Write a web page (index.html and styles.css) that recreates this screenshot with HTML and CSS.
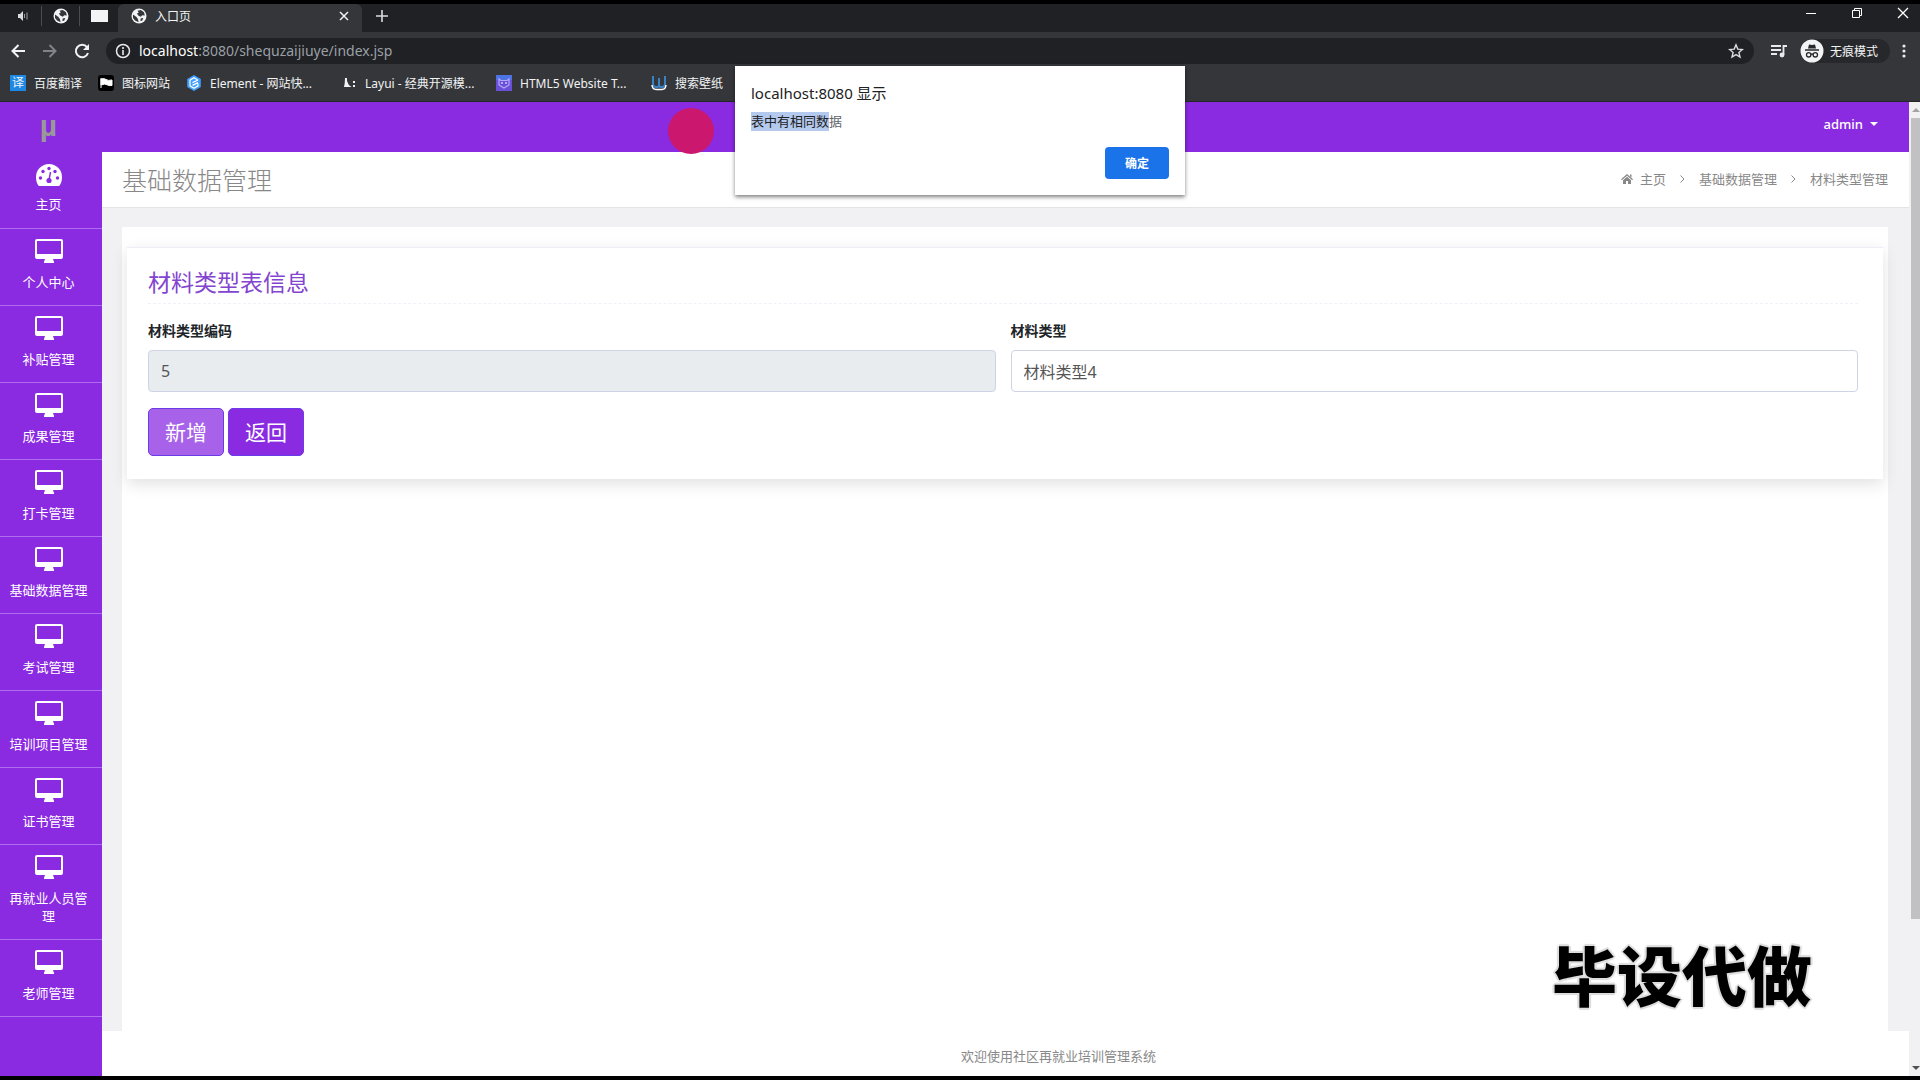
FILE: index.html
```html
<!DOCTYPE html>
<html lang="zh-CN">
<head>
<meta charset="UTF-8" />
<title>入口页</title>
<link rel="stylesheet" href="styles.css">
</head>
<body>
  <svg class="defs" aria-hidden="true">
    <symbol id="globe" viewBox="0 0 16 16">
      <circle cx="8" cy="8" r="7.5" fill="#f1f3f4"/>
      <path d="M2 6.5 5.5 9l1.5 2.2.6 3L4 12.5 2 10zM6.5 2.8 9.8 2l3.2 2.3.8 3.2-2.5-.3-1.5 1.6L7.2 7.4 6 5.6l1.8-1.2zM9.6 10.4l2.7-.4-1 2.4-1.8.9z" fill="#35363a"/>
    </symbol>
    <symbol id="desktop" viewBox="0 0 28 24">
      <path fill-rule="evenodd" d="M2 0h24a2 2 0 0 1 2 2v16a2 2 0 0 1-2 2h-8l1 3v1H9v-1l1-3H2a2 2 0 0 1-2-2V2a2 2 0 0 1 2-2zm0 2v13h24V2z" fill="#fff"/>
    </symbol>
  </svg>

  <header class="browser">
    <div class="tab-strip">
      <div class="pinned">
        <svg width="12" height="12" viewBox="0 0 12 12"><path d="M1 4h2l3-3v10L3 8H1z" fill="#dadce0"/><path d="M7.5 4v4M10 2.5v7" stroke="#9aa0a6" stroke-width="1"/></svg>
      </div>
      <div class="pinned"><svg width="16" height="16"><use href="#globe"/></svg></div>
      <div class="pinned"><span class="blank-icon"></span></div>
      <div class="tab">
        <svg width="16" height="16"><use href="#globe"/></svg>
        <span class="tab-title">入口页</span>
        <button class="icon-btn" aria-label="关闭标签页"><svg width="10" height="10" viewBox="0 0 10 10"><path d="M1 1l8 8M9 1L1 9" stroke="#f1f3f4" stroke-width="1.5"/></svg></button>
      </div>
      <button class="icon-btn new-tab" aria-label="新标签页"><svg width="12" height="12" viewBox="0 0 12 12"><path d="M6 0v12M0 6h12" stroke="#dadce0" stroke-width="1.6"/></svg></button>
      <div class="window-btns">
        <button class="icon-btn" aria-label="最小化"><svg width="12" height="12" viewBox="0 0 12 12"><path d="M1 6.5h10" stroke="#fff"/></svg></button>
        <button class="icon-btn" aria-label="还原"><svg width="12" height="12" viewBox="0 0 12 12"><path d="M1.5 3.5h7v7h-7zM3.5 3V1.5h7v7H9" fill="none" stroke="#fff"/></svg></button>
        <button class="icon-btn" aria-label="关闭"><svg width="12" height="12" viewBox="0 0 12 12"><path d="M1 1l10 10M11 1L1 11" stroke="#fff" stroke-width="1.3"/></svg></button>
      </div>
    </div>

    <div class="toolbar">
      <button class="icon-btn" aria-label="后退"><svg width="16" height="16" viewBox="0 0 16 16"><path d="M8.5 2 2.5 8l6 6M2.5 8H15" fill="none" stroke="#f1f3f4" stroke-width="2"/></svg></button>
      <button class="icon-btn" aria-label="前进"><svg width="16" height="16" viewBox="0 0 16 16"><path d="M7.5 2l6 6-6 6M13.5 8H1" fill="none" stroke="#808387" stroke-width="2"/></svg></button>
      <button class="icon-btn" aria-label="刷新"><svg width="16" height="16" viewBox="0 0 16 16"><path d="M13 4.2A6.2 6.2 0 1 0 14 10" fill="none" stroke="#f1f3f4" stroke-width="2"/><path d="M15 1v6H9z" fill="#f1f3f4"/></svg></button>
      <div class="address">
        <svg width="16" height="16" viewBox="0 0 16 16"><circle cx="8" cy="8" r="6.5" fill="none" stroke="#e8eaed" stroke-width="1.5"/><path d="M8 7v5M8 4v2" stroke="#e8eaed" stroke-width="1.6"/></svg>
        <span class="url"><b>localhost</b>:8080/shequzaijiuye/index.jsp</span>
        <button class="icon-btn" aria-label="收藏"><svg width="16" height="16" viewBox="0 0 16 16"><path d="M8 1.8l1.8 4.3 4.6.4-3.5 3 1.1 4.5L8 11.6 4 14l1.1-4.5-3.5-3 4.6-.4z" fill="none" stroke="#dadce0" stroke-width="1.4"/></svg></button>
      </div>
      <button class="icon-btn" aria-label="媒体控制"><svg width="18" height="16" viewBox="0 0 18 16"><path d="M1 3h10M1 7h10M1 11h6" stroke="#e8eaed" stroke-width="1.8"/><path d="M13.5 12V3H17" fill="none" stroke="#e8eaed" stroke-width="1.8"/><circle cx="12" cy="12" r="2.4" fill="#e8eaed"/></svg></button>
      <div class="incognito">
        <svg width="24" height="24" viewBox="0 0 24 24"><circle cx="12" cy="12" r="11.5" fill="#f1f3f4"/><path d="M8 9.5 9 5.500l3 .5 3-.5 1 4z" fill="#27282b"/><path d="M5 11h14M11 15.500q1-1 2 0" fill="none" stroke="#27282b" stroke-width="1.300"/><circle cx="8.700" cy="15.800" r="2.200" fill="none" stroke="#27282b" stroke-width="1.300"/><circle cx="15.300" cy="15.800" r="2.200" fill="none" stroke="#27282b" stroke-width="1.300"/></svg>
        <span>无痕模式</span>
      </div>
      <button class="icon-btn" aria-label="菜单"><svg width="4" height="14" viewBox="0 0 4 14"><circle cx="2" cy="2" r="1.6" fill="#e8eaed"/><circle cx="2" cy="7" r="1.6" fill="#e8eaed"/><circle cx="2" cy="12" r="1.6" fill="#e8eaed"/></svg></button>
    </div>

    <nav class="bookmarks">
      <a href="#"><span class="fanyi-icon">译</span>百度翻译</a>
      <a href="#"><svg width="16" height="16" viewBox="0 0 16 16"><rect width="16" height="16" rx="3" fill="#000"/><path d="M3 3v10M3 4q3-1 5 .5T14 5v5.5q-3 .5-5-.8T3 10z" fill="#fff" stroke="#fff"/></svg>图标网站</a>
      <a href="#" class="long"><svg width="16" height="16" viewBox="0 0 16 16"><path d="M8 0l6.800 4v8L8 16l-6.800-4V4z" fill="#409eff"/><path d="M11.500 4.800 8 2.800 4 5.200v5.600L8 13.200l4-2.400V8.600M6.500 7.600l5.500-2.600M6.500 10.400l5.500-2.800" fill="none" stroke="#fff" stroke-width="1.200"/></svg>Element - 网站快...</a>
      <a href="#" class="long"><svg width="16" height="16" viewBox="0 0 16 16"><path d="M4 3h2v9H3q1-4 1-9zM6 6q1 4 4.500 6H6zM12 6h2v2h-2zM12 10h2v2h-2z" fill="#f1f3f4"/></svg>Layui - 经典开源模...</a>
      <a href="#" class="long"><svg width="16" height="16" viewBox="0 0 16 16"><rect width="16" height="16" fill="#6a4fd8"/><path d="M0 0h16v5H0z" fill="#4d72e3"/><path d="M3 4l2 1.500h6L13 4v6l-5 3-5-3z" fill="none" stroke="#b7a8ff" stroke-width="1.200"/><circle cx="6" cy="8" r="1" fill="#cfc6ff"/><circle cx="10" cy="8" r="1" fill="#cfc6ff"/></svg>HTML5 Website T...</a>
      <a href="#"><svg width="16" height="16" viewBox="0 0 16 16"><path d="M2 1v8q0 3 3 3h1q2 0 2-2V3M8 10q0 2 2 2h1q3 0 3-3V1" fill="none" stroke="#3b82c4" stroke-width="2"/><path d="M1 10q.5 4.500 4 4.500h6q3.500 0 4-4.500" fill="none" stroke="#fff" stroke-width="1.500"/></svg>搜索壁纸</a>
    </nav>
  </header>

  <div class="viewport">
    <aside class="sidebar">
      <a href="#" class="logo">µ</a>
      <a href="#" class="menu-item home">
        <svg width="26" height="22" viewBox="0 0 26 22"><path d="M13 0a13 13 0 0 1 13 13c0 3-.7 6-2 8q-.5 1-1.500 1h-19Q2.500 22 2 21c-1.300-2-2-5-2-8A13 13 0 0 1 13 0z" fill="#fff"/><g fill="#8a2be2"><circle cx="4.500" cy="14" r="1.700"/><circle cx="7" cy="7.500" r="1.700"/><circle cx="13" cy="4.500" r="1.700"/><circle cx="19" cy="7.500" r="1.700"/><circle cx="21.500" cy="14" r="1.700"/><circle cx="13" cy="16.500" r="2.600"/></g><path d="M13 16l1.500-8" stroke="#8a2be2" stroke-width="1.400"/></svg>
        <span>主页</span>
      </a>
      <a href="#" class="menu-item"><svg width="28" height="24"><use href="#desktop"/></svg><span>个人中心</span></a>
      <a href="#" class="menu-item"><svg width="28" height="24"><use href="#desktop"/></svg><span>补贴管理</span></a>
      <a href="#" class="menu-item"><svg width="28" height="24"><use href="#desktop"/></svg><span>成果管理</span></a>
      <a href="#" class="menu-item"><svg width="28" height="24"><use href="#desktop"/></svg><span>打卡管理</span></a>
      <a href="#" class="menu-item"><svg width="28" height="24"><use href="#desktop"/></svg><span>基础数据管理</span></a>
      <a href="#" class="menu-item"><svg width="28" height="24"><use href="#desktop"/></svg><span>考试管理</span></a>
      <a href="#" class="menu-item"><svg width="28" height="24"><use href="#desktop"/></svg><span>培训项目管理</span></a>
      <a href="#" class="menu-item"><svg width="28" height="24"><use href="#desktop"/></svg><span>证书管理</span></a>
      <a href="#" class="menu-item"><svg width="28" height="24"><use href="#desktop"/></svg><span>再就业人员管理</span></a>
      <a href="#" class="menu-item"><svg width="28" height="24"><use href="#desktop"/></svg><span>老师管理</span></a>
    </aside>

    <div class="main">
      <div class="navbar">
        <button class="user">admin <span class="caret"></span></button>
      </div>
      <div class="title-bar">
        <h1>基础数据管理</h1>
        <nav class="breadcrumb">
          <a href="#"><svg width="12" height="12" viewBox="0 0 12 12"><path d="M6 1l6 5.300-.8.900L6 2.800.8 7.200 0 6.300zM9 1.500h1.500v3L9 3.200z" fill="#888"/><path d="M6 3.800l4 3.400V11H7V8H5v3H2V7.200z" fill="#888"/></svg>主页</a>
          <svg width="5" height="8" viewBox="0 0 5 8"><path d="M.5.5 4 4 .5 7.500" fill="none" stroke="#888"/></svg>
          <span>基础数据管理</span>
          <svg width="5" height="8" viewBox="0 0 5 8"><path d="M.5.5 4 4 .5 7.500" fill="none" stroke="#888"/></svg>
          <span>材料类型管理</span>
        </nav>
      </div>

      <div class="content">
        <div class="panel">
          <form class="card">
            <h2>材料类型表信息</h2>
            <div class="fields">
              <div class="field">
                <label for="typeCode">材料类型编码</label>
                <input type="text" id="typeCode" value="5" readonly />
              </div>
              <div class="field">
                <label for="typeName">材料类型</label>
                <input type="text" id="typeName" value="材料类型4" />
              </div>
            </div>
            <div class="actions">
              <button type="button" class="btn btn-add">新增</button>
              <button type="button" class="btn">返回</button>
            </div>
          </form>
        </div>
      </div>

      <footer class="footer">欢迎使用社区再就业培训管理系统</footer>
    </div>

    <div class="scrollbar">
      <span class="arrow up"></span>
      <div class="track"><div class="thumb"></div></div>
      <span class="arrow down"></span>
    </div>
  </div>

  <div class="pointer"></div>

  <div class="dialog" role="alertdialog" aria-labelledby="dialogTitle">
    <p class="dialog-title" id="dialogTitle">localhost:8080 显示</p>
    <p class="dialog-text"><mark>表中有相同数</mark>据</p>
    <button class="dialog-ok">确定</button>
  </div>

  <div class="watermark">毕设代做</div>
</body>
</html>
```

FILE: styles.css
```css
* {
  box-sizing: border-box;
}

body {
  margin: 0;
  height: 100vh;
  display: flex;
  flex-direction: column;
  border-top: 4px solid #000;
  border-bottom: 4px solid #000;
  overflow: hidden;
  position: relative;
  font-family: "Noto Sans", "Noto Sans CJK SC", sans-serif;
  font-size: 13px;
  color: #212529;
  background-color: #fff;
}

h1, h2, p {
  margin: 0;
}

a {
  color: inherit;
  text-decoration: none;
}

button, input {
  font-family: inherit;
}

svg {
  display: block;
  flex-shrink: 0;
}

.defs {
  position: absolute;
  width: 0;
  height: 0;
}

/* 浏览器 */
.browser {
  background-color: #35363a;
  color: #f1f3f4;
  font-size: 12px;
  border-bottom: 1px solid #242528;
}

.icon-btn {
  display: flex;
  padding: 0;
  border: none;
  background: none;
  cursor: pointer;
}

.tab-strip {
  display: flex;
  align-items: center;
  height: 28px;
  padding-left: 4px;
  background-color: #202124;
}

.pinned {
  display: flex;
  justify-content: center;
  align-items: center;
  width: 38px;
  height: 20px;
  margin-bottom: 4px;
  border-right: 1px solid #4a4c50;
}

.pinned:nth-child(3) {
  border-right: none;
}

.blank-icon {
  width: 17px;
  height: 12px;
  background-color: #f1f3f4;
}

.tab {
  display: flex;
  align-items: center;
  gap: 8px;
  width: 244px;
  height: 28px;
  padding: 0 13px 4px;
  background-color: #35363a;
  border-radius: 6px 6px 0 0;
}

.tab-title {
  flex: 1;
}

.new-tab {
  margin: 0 0 4px 14px;
}

.window-btns {
  display: flex;
  gap: 34px;
  margin-left: auto;
  padding: 0 11px 10px 0;
}

.toolbar {
  display: flex;
  align-items: center;
  gap: 16px;
  height: 37px;
  padding: 0 14px 0 10px;
}

.address {
  flex: 1;
  display: flex;
  align-items: center;
  gap: 8px;
  height: 26px;
  padding: 0 10px 0 9px;
  border-radius: 13px;
  background-color: #202124;
}

.url {
  flex: 1;
  font-size: 14px;
  color: #9aa0a6;
}

.url b {
  font-weight: normal;
  color: #fff;
}

.incognito {
  display: flex;
  align-items: center;
  gap: 6px;
  height: 24px;
  margin-left: -4px;
  padding-right: 12px;
  border-radius: 12px;
  background-color: #27282b;
}

.toolbar .incognito + .icon-btn {
  margin-left: -4px;
}

.bookmarks {
  display: flex;
  align-items: center;
  gap: 16px;
  height: 32px;
  padding: 0 10px 4px;
}

.bookmarks a {
  display: flex;
  align-items: center;
  gap: 8px;
  white-space: nowrap;
}

.bookmarks .long {
  width: 139px;
}

.fanyi-icon {
  width: 16px;
  height: 16px;
  line-height: 16px;
  text-align: center;
  background-color: #1e88e5;
}

/* 页面 */
.viewport {
  flex: 1;
  display: flex;
  min-height: 0;
}

.sidebar {
  width: 102px;
  flex-shrink: 0;
  background-color: #8a2be2;
  color: #fff;
}

.logo {
  display: block;
  height: 52px;
  padding-right: 5px;
  text-align: center;
  font-family: "Liberation Sans", sans-serif;
  font-size: 30px;
  line-height: 48px;
  font-weight: bold;
  color: #999;
}

.menu-item {
  display: flex;
  flex-direction: column;
  align-items: center;
  gap: 10px;
  padding: 10px 13px 14px 8px;
  border-bottom: 1px solid #b06cf0;
  line-height: 18px;
  text-align: center;
}

.menu-item.home {
  gap: 9px;
  padding-bottom: 15px;
}

.main {
  flex: 1;
  display: flex;
  flex-direction: column;
  min-width: 0;
}

.navbar {
  display: flex;
  justify-content: flex-end;
  align-items: center;
  height: 50px;
  padding: 0 31px 6px;
  background-color: #8a2be2;
}

.user {
  display: flex;
  align-items: center;
  gap: 7px;
  padding: 0;
  border: none;
  background: none;
  color: #fff;
  font-size: 13px;
  font-weight: 500;
}

.caret {
  border: 4px solid transparent;
  border-top-color: #fff;
  border-bottom: none;
}

.title-bar {
  display: flex;
  justify-content: space-between;
  align-items: center;
  height: 56px;
  padding: 0 21px 2px 20px;
  background-color: #fff;
  border-bottom: 1px solid #e4e4e4;
}

.title-bar h1 {
  font-family: "Noto Sans CJK SC Light", "Noto Sans CJK SC", sans-serif;
  font-size: 25px;
  font-weight: 300;
  line-height: 36px;
  color: #888;
}

.breadcrumb {
  display: flex;
  align-items: center;
  gap: 14px;
  color: #888;
}

.breadcrumb a {
  display: flex;
  align-items: center;
  gap: 7px;
}

.content {
  flex: 1;
  display: flex;
  padding: 19px 21px 0 20px;
  background-color: #f1f1f4;
}

.panel {
  flex: 1;
  padding: 20px 5px;
  background-color: #fff;
}

.card {
  padding: 16px 25px 23px 21px;
  border-top: 1px solid #eeeef6;
  background-color: #fff;
  box-shadow: 0 5px 15px rgba(0, 0, 0, 0.12);
}

.card h2 {
  padding-bottom: 3px;
  border-bottom: 1px dashed #f0f0f8;
  font-size: 23px;
  line-height: 36px;
  font-weight: normal;
  color: #8344cf;
}

.fields {
  display: grid;
  grid-template-columns: 1fr 1fr;
  gap: 15px;
  padding-top: 16px;
}

.field label {
  display: block;
  margin-bottom: 8px;
  font-size: 14px;
  line-height: 22px;
  font-weight: bold;
}

.field input {
  display: block;
  width: 100%;
  height: 42px;
  padding: 0 12px;
  border: 1px solid #ced4e6;
  border-radius: 4px;
  background-color: #fff;
  font-size: 16px;
  color: #555;
}

.field input[readonly] {
  background-color: #e9ecef;
}

.actions {
  display: flex;
  gap: 4px;
  padding-top: 16px;
}

.btn {
  width: 76px;
  height: 48px;
  padding: 0 0 2px;
  border: 1px solid #6a3be8;
  border-radius: 5px;
  background-color: #8a2be2;
  color: #fff;
  font-size: 21px;
  cursor: pointer;
}

.btn-add {
  background-color: #a862ea;
}

.footer {
  height: 45px;
  padding: 6px 0 0 106px;
  line-height: 39px;
  text-align: center;
  color: #888;
}

.scrollbar {
  display: flex;
  flex-direction: column;
  align-items: flex-end;
  width: 11px;
  background-color: #f1f1f4;
}

.track {
  flex: 1;
  width: 9px;
}

.thumb {
  height: 85%;
  background-color: #c1c1c4;
}

.arrow {
  margin: 6px 0;
  border: 4px solid transparent;
}

.arrow.up {
  border-bottom-color: #a3a3a3;
  border-top: none;
}

.arrow.down {
  border-top-color: #505050;
  border-bottom: none;
}

/* 浮层 */
.pointer {
  position: absolute;
  top: 104px;
  left: 36%;
  width: 46px;
  height: 46px;
  margin-left: -23px;
  border-radius: 50%;
  background-color: #cc176e;
}

.dialog {
  position: absolute;
  top: 62px;
  left: 50%;
  transform: translateX(-50%);
  display: flex;
  flex-direction: column;
  width: 450px;
  padding: 16px;
  background-color: #fff;
  box-shadow: 0 2px 4px rgba(0, 0, 0, 0.5);
}

.dialog-title {
  font-size: 15px;
  line-height: 22px;
  color: #202124;
}

.dialog-text {
  margin-top: 8px;
  line-height: 19px;
  color: #5f6368;
}

.dialog-text mark {
  display: inline-block;
  background-color: #b4c9ee;
  color: #202124;
}

.dialog-ok {
  align-self: flex-end;
  width: 64px;
  height: 32px;
  margin-top: 16px;
  border: none;
  border-radius: 4px;
  background-color: #1a73e8;
  color: #fff;
  font-size: 12px;
  font-weight: bold;
  cursor: pointer;
}

.watermark {
  position: absolute;
  right: 108px;
  bottom: 60px;
  font-size: 65px;
  line-height: 80px;
  font-weight: 900;
  color: #000;
  text-shadow: 2px 0 #ddd, -2px 0 #ddd, 0 2px #ddd, 0 -2px #ddd, 0 0 3px #888;
}
```
